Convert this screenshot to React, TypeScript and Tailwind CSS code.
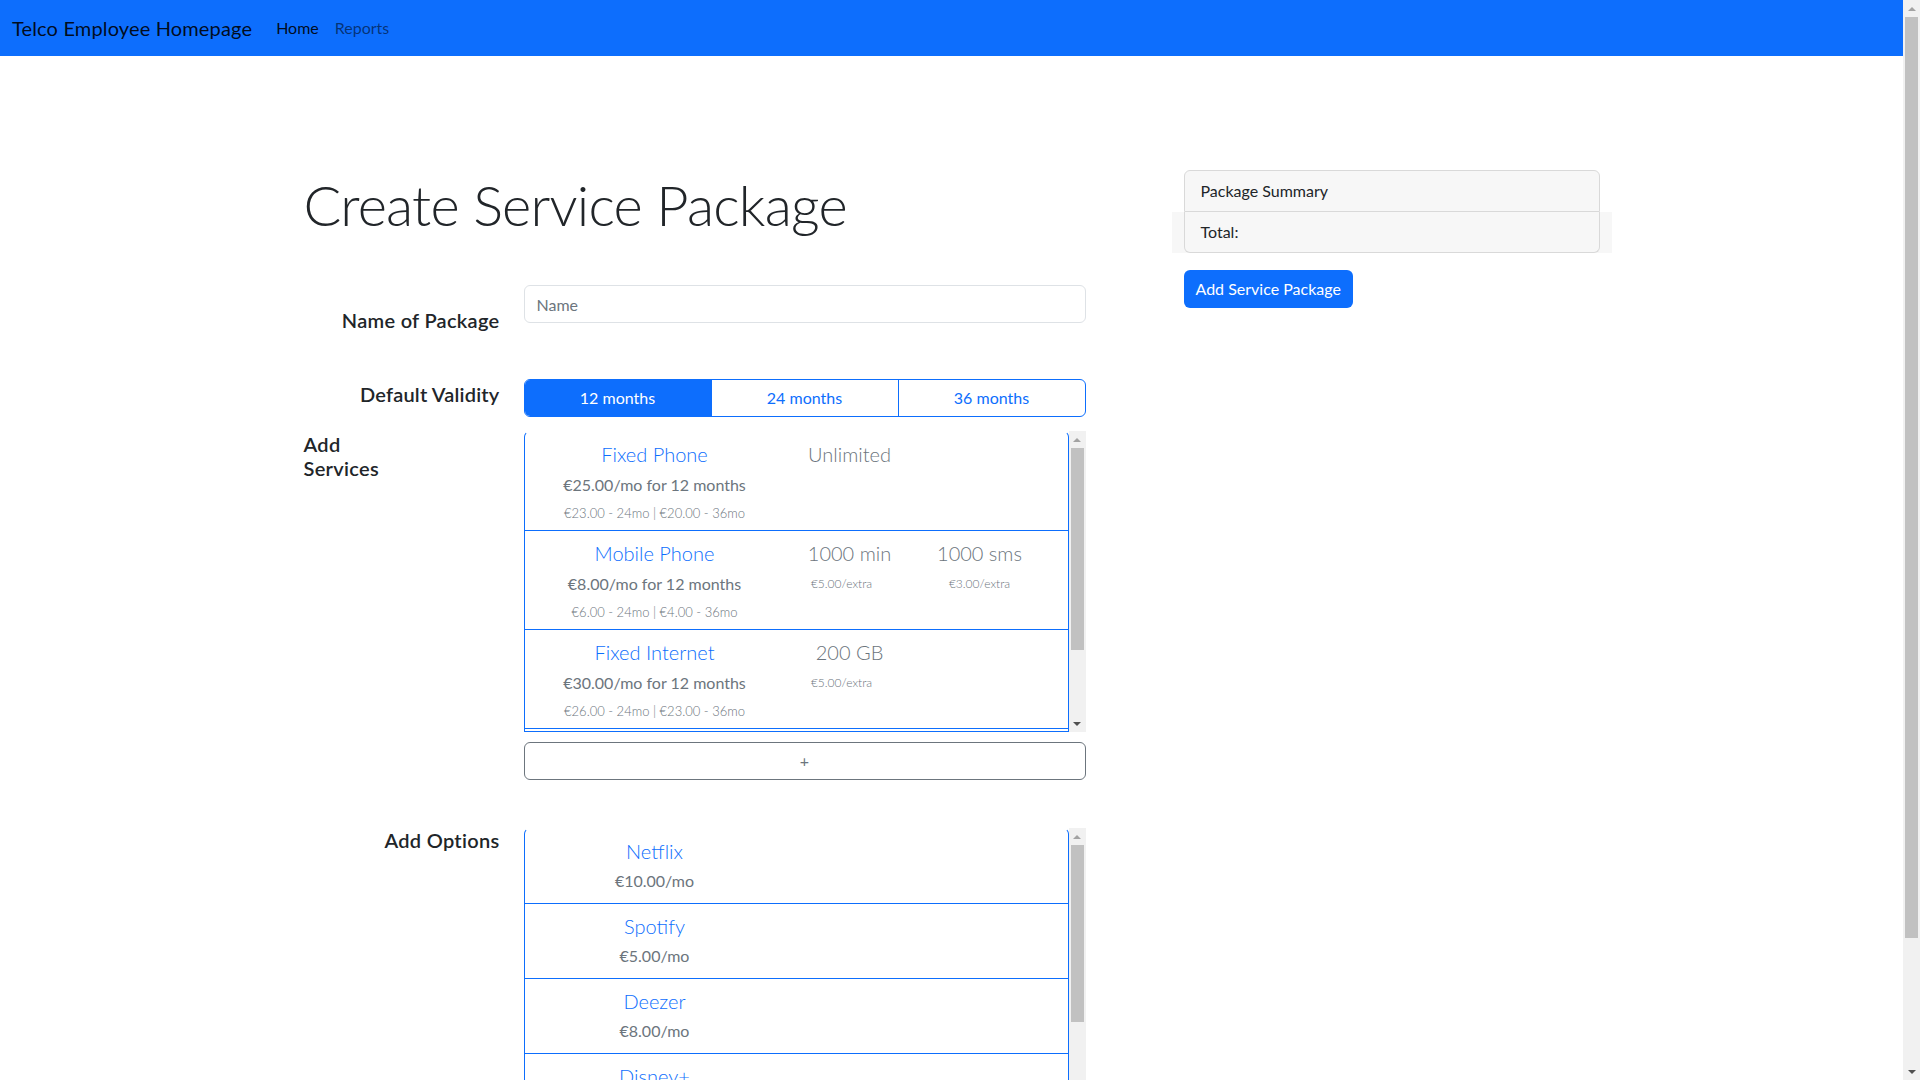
import React from "react";

type Extra = { title: string; extra?: string; shift?: boolean };

const services: { name: string; price: string; other: string; cols: Extra[] }[] = [
  {
    name: "Fixed Phone",
    price: "€25.00/mo for 12 months",
    other: "€23.00 - 24mo | €20.00 - 36mo",
    cols: [{ title: "Unlimited" }],
  },
  {
    name: "Mobile Phone",
    price: "€8.00/mo for 12 months",
    other: "€6.00 - 24mo | €4.00 - 36mo",
    cols: [
      { title: "1000 min", extra: "€5.00/extra", shift: true },
      { title: "1000 sms", extra: "€3.00/extra" },
    ],
  },
  {
    name: "Fixed Internet",
    price: "€30.00/mo for 12 months",
    other: "€26.00 - 24mo | €23.00 - 36mo",
    cols: [{ title: "200 GB", extra: "€5.00/extra", shift: true }],
  },
];

const options = [
  { name: "Netflix", price: "€10.00/mo" },
  { name: "Spotify", price: "€5.00/mo" },
  { name: "Deezer", price: "€8.00/mo" },
  { name: "Disney+" },
];

function Scrollbar({
  heightClass,
  thumbClass,
  upColor = "border-b-[#a3a3a3]",
}: {
  heightClass: string;
  thumbClass: string;
  upColor?: string;
}) {
  return (
    <div className={`flex flex-col w-[17px] shrink-0 bg-[#f1f1f1] ${heightClass}`}>
      <div className="h-[17px] shrink-0 flex items-center justify-center">
        <div className={`w-0 h-0 border-x-[4px] border-x-transparent border-b-[4px] ${upColor}`} />
      </div>
      <div className="flex-1 px-[2px]">
        <div className={`bg-[#c1c1c1] ${thumbClass}`} />
      </div>
      <div className="h-[17px] shrink-0 flex items-center justify-center">
        <div className="w-0 h-0 border-x-[4px] border-x-transparent border-t-[4px] border-t-[#505050]" />
      </div>
    </div>
  );
}

function ServiceItem({ service }: { service: (typeof services)[number] }) {
  return (
    <div className="grid grid-cols-[260px_130px_130px] border-b border-[#0d6efd] pt-[10px] pb-[7px]">
      <div className="flex flex-col items-center">
        <p className="text-[20px] leading-[24px] font-light text-[#0d6efd]">{service.name}</p>
        <p className="mt-[7px] text-[16px] leading-[24px] text-[#6c757d]">{service.price}</p>
        <p className="mt-[6px] text-[13px] leading-[20px] font-light text-[#6c757d]">
          {service.other}
        </p>
      </div>
      {service.cols.map((c) => (
        <div key={c.title} className="flex flex-col items-center">
          <p className="text-[20px] leading-[24px] font-light text-[#6c757d]">{c.title}</p>
          {c.extra && (
            <p
              className={`mt-[7px] text-[12px] leading-[24px] font-light text-[#6c757d] ${
                c.shift ? "mr-[16px]" : ""
              }`}
            >
              {c.extra}
            </p>
          )}
        </div>
      ))}
    </div>
  );
}

export default function App() {
  return (
    <div className="flex h-[1080px] overflow-hidden bg-white font-['Lato','Liberation_Sans',sans-serif] text-[#212529]">
      <div className="flex-1 min-w-0">
        <nav className="h-[56px] bg-[#0d6efd] flex items-center px-3">
          <span className="text-[20px] leading-[30px] py-[5px] mr-4 tracking-[0.15px] text-[rgba(0,0,0,0.9)]">
            Telco Employee Homepage
          </span>
          <a className="px-2 py-2 text-[16px] leading-6 text-[rgba(0,0,0,0.9)]">Home</a>
          <a className="px-2 py-2 text-[16px] leading-6 text-[rgba(0,0,0,0.55)]">Reports</a>
        </nav>

        <div className="w-[1320px] mx-auto flex pt-[114px]">
          {/* left column: the form */}
          <div className="w-[880px] px-3">
            <h1 className="mt-[1px] text-[56px] leading-[1.2] font-light tracking-[-0.8px] text-[#212529]">
              Create Service Package
            </h1>

            <div className="mt-[47px] flex">
              <label className="w-[196px] pt-[23px] text-right text-[20px] leading-6 font-semibold tracking-[0.3px]">
                Name of Package
              </label>
              <div className="ml-6 w-[562px]">
                <input
                  type="text"
                  placeholder="Name"
                  className="w-full h-[38px] px-3 border border-[#dee2e6] rounded-[6px] text-[16px] placeholder:text-[#6c757d] outline-none"
                />
              </div>
            </div>

            <div className="mt-[47px] flex">
              <label className="w-[196px] pt-[3px] text-right text-[20px] leading-6 font-semibold tracking-[0.2px]">
                Default Validity
              </label>
              <div className="ml-6 w-[562px] h-[38px] flex border border-[#0d6efd] rounded-[6px] overflow-hidden text-[16px]">
                <button className="flex-1 bg-[#0d6efd] text-white">12 months</button>
                <button className="flex-1 border-l border-[#0d6efd] text-[#0d6efd]">24 months</button>
                <button className="flex-1 border-l border-[#0d6efd] text-[#0d6efd]">36 months</button>
              </div>
            </div>

            <div className="mt-[14px] flex">
              <label className="w-[196px] pt-[1px] text-[20px] leading-6 font-semibold tracking-[0.3px]">
                Add
                <br />
                Services
              </label>
              <div className="ml-6 w-[562px]">
                <div className="flex">
                  <div className="flex-1 h-[301px] overflow-hidden border border-[#0d6efd] border-t-transparent rounded-t-[6px]">
                    {services.map((s) => (
                      <ServiceItem key={s.name} service={s} />
                    ))}
                  </div>
                  <Scrollbar heightClass="h-[301px]" thumbClass="h-[202px]" />
                </div>
                <button className="mt-[10px] w-full h-[38px] border border-[#6c757d] rounded-[6px] text-[16px] text-[#6c757d]">
                  +
                </button>
              </div>
            </div>

            <div className="mt-[48px] flex">
              <label className="w-[196px] text-right text-[20px] leading-6 font-semibold tracking-[0.3px]">
                Add Options
              </label>
              <div className="ml-6 w-[562px] flex">
                <div className="flex-1 h-[320px] overflow-hidden border border-[#0d6efd] border-t-transparent rounded-t-[6px]">
                  {options.map((o) => (
                    <div
                      key={o.name}
                      className="grid grid-cols-[260px_1fr] border-b border-[#0d6efd] pt-[10px] pb-[10px]"
                    >
                      <div className="flex flex-col items-center">
                        <p className="text-[20px] leading-[24px] font-light text-[#0d6efd]">{o.name}</p>
                        {o.price && (
                          <p className="mt-[6px] text-[16px] leading-[24px] text-[#6c757d]">{o.price}</p>
                        )}
                      </div>
                    </div>
                  ))}
                </div>
                <Scrollbar heightClass="h-[320px]" thumbClass="h-[177px]" />
              </div>
            </div>
          </div>

          {/* right column: summary */}
          <div className="w-[440px] px-3">
            <div className="border border-[#d9d9d9] rounded-t-[6px] bg-[#f7f7f7] px-4 py-2 text-[16px] leading-6">
              Package Summary
            </div>
            <div className="-mx-3 px-3 bg-[#f7f7f7]">
              <div className="border-x border-b border-[#d9d9d9] rounded-b-[6px] px-4 py-2 text-[16px] leading-6">
                Total:
              </div>
            </div>
            <button className="mt-[17px] h-[38px] px-3 bg-[#0d6efd] text-white rounded-[6px] text-[16px] leading-6">
              Add Service Package
            </button>
          </div>
        </div>
      </div>

      <Scrollbar heightClass="h-[1080px]" thumbClass="h-[921px]" />
    </div>
  );
}
